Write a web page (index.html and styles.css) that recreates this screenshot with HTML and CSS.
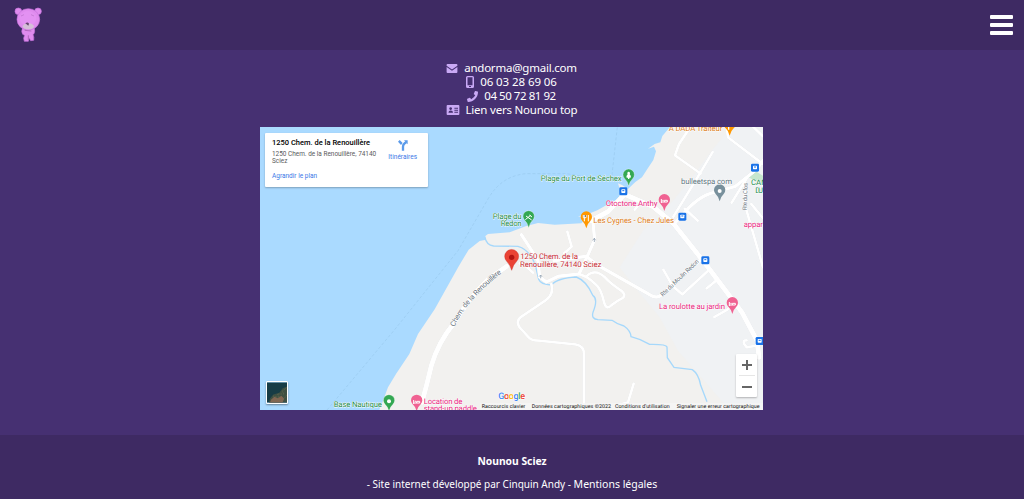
FILE: index.html
```html
<!DOCTYPE html>
<html lang="fr">
<head>
<meta charset="utf-8">
<title>Nounou Sciez</title>
<link rel="stylesheet" href="styles.css">
</head>
<body>
<header class="header">
  <svg class="logo" viewBox="0 0 90 108" aria-label="Nounou Sciez">
    <g fill="#df8bee" stroke="#c571dc" stroke-width="2">
      <circle cx="13" cy="13" r="10"/><circle cx="72" cy="13" r="10"/>
      <path d="M27 60Q20 74 26 82L32 85Q26 94 31 103L43 103L46 93L50 101L59 100Q61 90 57 83Q65 76 60 62Z"/>
      <ellipse cx="43" cy="37" rx="34" ry="32"/>
    </g>
    <ellipse cx="42" cy="34" rx="25" ry="22" fill="#e391f2"/>
    <path d="M21 27L30 23M51 23L60 27" stroke="#b971c9" stroke-width="2"/>
    <ellipse cx="43" cy="58" rx="17" ry="9" fill="#d5bed8"/>
    <path d="M34 49Q41 43 45 50L43 56Z" fill="#66446e"/>
    <path d="M32 70L52 72M43 85V99" stroke="#b167be" stroke-width="3"/>
  </svg>
  <button class="burger" aria-label="Menu"><i></i><i></i><i></i></button>
</header>
<main class="main">
  <ul class="contacts">
    <li><svg class="mail" viewBox="0 0 12 10"><path d="M1 0H11Q12 0 12 1V2L6 6L0 2V1Q0 0 1 0ZM0 3.3L6 7.4L12 3.3V9Q12 10 11 10H1Q0 10 0 9Z"/></svg><a class="wide">andorma@gmail.com</a></li>
    <li><svg class="phone" viewBox="0 0 8 12"><path fill-rule="evenodd" d="M1.5 0H6.5Q8 0 8 1.5V10.5Q8 12 6.5 12H1.5Q0 12 0 10.5V1.5Q0 0 1.5 0ZM1.5 1.3V9.2H6.5V1.3ZM3 10V11H5V10Z"/></svg><a class="mobile">06 03 28 69 06</a></li>
    <li><svg class="call" viewBox="0 0 512 512"><path d="M493 25L389 1Q373-2 366 13L318 125Q312 139 323 148L384 198Q330 312 198 384L148 323Q139 312 125 318L13 366Q-2 373 1 389L25 493Q29 512 48 512C305 512 512 304 512 48Q512 29 493 25Z"/></svg><a class="fixed">04 50 72 81 92</a></li>
    <li><svg class="card" viewBox="0 0 14 11"><path fill-rule="evenodd" d="M1 0H13Q14 0 14 1V10Q14 11 13 11H1Q0 11 0 10V1Q0 0 1 0ZM4.4 2.4A1.5 1.5 0 1 0 4.41 2.4ZM2 8.5H7Q7 6 4.5 6Q2 6 2 8.5ZM8.5 3V4H12.5V3ZM8.5 5.2V6.2H12.5V5.2ZM8.5 7.4V8.4H12.5V7.4Z"/></svg><a class="wide">Lien vers Nounou top</a></li>
  </ul>
  <section class="map">
    <svg class="mapdraw" viewBox="6 9 1509 849">
      <defs>
        <path id="pin" d="M0 26Q-3 12-12 4A17 17 0 1 1 12 4Q3 12 0 26Z"/>
        <g id="bed" fill="none" stroke="#fff" stroke-width="3"><path d="M-9-15V-3M-9-6H9V-11H0V-6"/><circle cx="-4" cy="-11" r="1"/></g>
        <g id="bus"><rect x="-12" y="-12" width="24" height="24" rx="4" fill="#1a73e8"/><rect x="-6" y="-6" width="12" height="11" rx="2" fill="#fff"/><path d="M-3-2H3M-4 6V8M4 6V8" stroke="#1a73e8" stroke-width="3"/></g>
        <path id="chemin" d="M590 609Q620 535 732 446"/>
        <path id="moulin" d="M1214 518L1326 412"/>
      </defs>
      <rect x="6" y="9" width="1509" height="849" fill="#aadaff"/>
      <path class="land" d="M1236 9L1213 36L1207 55L1190 60L1170 74L1188 68L1194 82L1186 108L1166 138L1152 160L1132 174L1110 195L1092 183L1080 178L1088 205L1082 224L1050 241L1018 259L985 272L960 277L985 282L970 298L890 302L840 297L805 306L755 325L690 330L682 336L684 347L665 351L632 377L603 425L530 556L480 630L454 690L414 750L390 790L375 830L364 858H1515V9Z"/>
      <path fill="#f0f2f4" d="M1420 9L1365 75L1300 163L1245 230L1155 320L1085 430L1135 495L1205 580L1260 680L1415 858H1515V9Z"/>
      <path fill="#c7e7ce" d="M1472 160L1493 142L1515 155V180L1492 171Z"/>
      <path class="ferry" d="M207 858L410 617L600 380L690 225Q730 155 805 149L925 149L1060 170L1078 9"/>
      <path class="river" d="M681 340Q685 363 707 366L780 367Q815 377 832 423L842 466Q848 482 880 483Q898 462 955 459Q985 470 1005 515Q1021 525 1005 565Q999 585 1020 587L1062 589Q1079 602 1098 606Q1118 620 1119 638Q1148 645 1175 661Q1225 660 1227 669L1228 701L1248 730L1303 737Q1322 750 1328 784L1347 833"/>
      <g class="roadedge"><use href="#roads"/></g>
      <g id="roads" class="roads">
        <path class="big" d="M492 835Q507 780 520 725Q540 655 589 596Q635 520 690 466L746 427"/>
        <path class="big" d="M1000 290L1050 263L1100 211L1185 248L1246 298L1345 423L1452 565L1497 650L1503 700"/>
        <path class="mid" d="M1004 285L1010 347L988 397L963 450L900 457L865 474L845 459L840 410L815 370L790 332"/>
        <path class="mid" d="M888 410L985 397L1020 424L1175 512Q1196 525 1210 513L1325 410"/>
        <path d="M785 418L804 427L825 446"/>
        <path d="M928 323L941 368L918 388"/>
        <path d="M880 480Q889 512 861 530L792 577Q772 590 784 609L811 639Q820 650 842 650L952 661Q978 665 978 690V858"/>
        <path d="M966 451Q989 458 1010 478Q1029 492 1038 534Q1044 560 1061 543Q1078 530 1094 522Q1106 514 1090 500Q1056 477 1042 461Q1012 432 986 456"/>
        <path d="M1293 15L1263 60L1251 94L1328 149M1364 84L1324 151L1246 278M1280 254L1319 290M1216 437L1244 486L1273 511L1354 437M1346 493L1373 471M1369 579L1405 559L1424 544M1127 779L1110 835L1085 842"/>
        <path class="mid" d="M1250 298L1272 275Q1320 215 1370 205L1432 187L1495 137L1515 110"/>
        <path d="M1406 9L1410 40L1515 120M1466 163L1421 236M1460 165V240L1515 430M1480 240L1515 283M1486 9L1515 37M1140 245L1130 257"/>
        <path d="M1466 649Q1453 648 1459 661L1466 670L1495 665"/>
      </g>
      <path fill="none" stroke="#7f91a4" stroke-width="2" d="M1009 343V354M1004 349L1009 343L1013 349M848 454V463M843 458L848 453L852 458"/>
      <g fill="#34a853" stroke="#fff" stroke-width="1"><use href="#pin" x="1112" y="160"/><use href="#pin" x="812" y="285"/><use href="#pin" x="393" y="837"/></g>
      <path fill="#fff" d="M1112 143A5 5 0 0 1 1115 151Q1121 157 1118 161H1114V165H1110V161H1106Q1103 157 1109 151A5 5 0 0 1 1112 143Z"/>
      <path stroke="#fff" stroke-width="3" fill="none" d="M802 287L818 274M804 276L821 288M814 273L822 279"/>
      <circle cx="393" cy="832" r="6" fill="#fff"/>
      <g fill="#f06292"><use href="#pin" x="1219" y="235"/><use href="#pin" x="1423" y="544"/><use href="#pin" x="476" y="837"/></g>
      <use href="#bed" x="1219" y="240"/><use href="#bed" x="1423" y="549"/><use href="#bed" x="476" y="843"/>
      <g fill="#ff9800"><use href="#pin" x="985" y="287"/><use href="#pin" x="1415" y="9"/></g>
      <path stroke="#fff" stroke-width="3" d="M979 273V292M984 273V281H976V273M991 273V292"/>
      <path stroke="#fff" stroke-width="4" d="M1412 0V17"/>
      <use href="#pin" x="1385" y="206" fill="#78909c"/><circle cx="1385" cy="201" r="6" fill="#fff"/>
      <use href="#bus" x="1096" y="202"/><use href="#bus" x="1273" y="278"/><use href="#bus" x="1342" y="409"/><use href="#bus" x="1491" y="131"/><use href="#bus" x="1505" y="651"/>
      <path fill="#ea4335" stroke="#c5221f" stroke-width="1" d="M761 439Q757 423 746 412A21 21 0 1 1 776 412Q765 423 761 439Z"/><circle cx="761" cy="400" r="8" fill="#b31412"/>
      <g class="labels">
        <g fill="#198b4b"><text x="848" y="170" textLength="243">Plage du Port de Séchex</text><text x="704" y="285" textLength="87">Plage du</text><text x="728" y="307" textLength="63">Redon</text><text x="227" y="849" textLength="145">Base Nautique</text><text x="1479" y="184">CAM</text><text x="1492" y="207" textLength="23">DU</text></g>
        <g fill="#e91e7d"><text x="1043" y="245" textLength="155">Otoctone.Anthy</text><text x="1203" y="555" textLength="198">La roulotte au jardin</text><text x="497" y="839" textLength="116">Location de</text><text x="497" y="861" textLength="160">stand-up paddle</text><text x="1457" y="309" textLength="58">appar</text></g>
        <g fill="#dc7b16"><text x="1006" y="298" textLength="242">Les Cygnes - Chez Jules</text><text x="1232" y="20" textLength="161">A DADA Traiteur</text></g>
        <text x="1269" y="179" fill="#607580" textLength="153">bulleetspa com</text>
        <g fill="#c52932"><text x="787" y="406" textLength="173">1250 Chem. de la</text><text x="786" y="429" textLength="244">Renouillère, 74140 Sciez</text></g>
      </g>
      <g class="streets"><text font-size="22"><textPath href="#chemin" textLength="217">Chem. de la Renouillère</textPath></text><text font-size="18"><textPath href="#moulin" textLength="151">Rte du Moulin Redon</textPath></text><text font-size="18" transform="translate(1466 259) rotate(-88)" textLength="82">Rte du Clos</text></g>
      <g class="google"><text x="721" y="825" textLength="80"><tspan fill="#4285f4">G</tspan><tspan fill="#ea4335">o</tspan><tspan fill="#fbbc04">o</tspan><tspan fill="#4285f4">g</tspan><tspan fill="#34a853">l</tspan><tspan fill="#ea4335">e</tspan></text></g>
      <path fill="#f5f5f5" fill-opacity=".75" d="M666 837H1515V858H666Z"/>
      <g class="legal"><text x="671" y="852" textLength="131">Raccourcis clavier</text><text x="821" y="852" textLength="238">Données cartographiques ©2022</text><text x="1071" y="852" textLength="164">Conditions d'utilisation</text><text x="1256" y="852" textLength="249">Signaler une erreur cartographique</text></g>
    </svg>
    <aside class="place">
      <div class="details"><h2>1250 Chem. de la Renouillère</h2><p>1250 Chem. de la Renouillère, 74140 Sciez</p><a>Agrandir le plan</a></div>
      <div class="directions"><svg viewBox="0 0 30 33"><path fill="none" stroke="#5b9bea" stroke-width="7" d="M15 32V20Q15 15 19 11L25 6"/><path fill="#5b9bea" d="M18 1H29V13ZM0 5L5 0L14 9L9 15Z"/></svg><a>Itinéraires</a></div>
    </aside>
    <svg class="satellite" viewBox="0 0 60 60"><path fill="#173c45" d="M0 0H60V60H0Z"/><path fill="#3f5042" d="M60 12L47 17L37 31L19 36L9 48L6 60H60Z"/><path fill="#826652" d="M12 52L22 43L33 47L43 40L51 48L47 60H9Z"/><path stroke="#747456" stroke-width="2" stroke-dasharray="3 4" fill="none" d="M58 16L45 27L52 34L31 35L38 45L19 41M58 39L46 56L29 50L18 59"/></svg>
    <div class="zoom"><button aria-label="Zoom avant"><svg viewBox="0 0 10 10"><path d="M0 5H10M5 0V10"/></svg></button><button aria-label="Zoom arrière"><svg viewBox="0 0 10 10"><path d="M0 5H10"/></svg></button></div>
  </section>
</main>
<footer class="footer"><strong>Nounou Sciez</strong><p><span class="credit">- Site internet développé par Cinquin Andy -</span> <a class="mentions">Mentions légales</a></p></footer>
</body>
</html>
```
FILE: styles.css
```css
* { box-sizing: border-box; }
body { margin: 0; height: 499px; overflow: hidden; display: flex; flex-direction: column; background: #463072; color: #fff; font-family: "Noto Sans", sans-serif; }
.header { height: 50px; flex: none; background: #3e2a63; display: flex; justify-content: space-between; padding: 7px 11px 0 14px; }
.logo { width: 30px; height: 36px; }
.burger { width: 23px; height: 20px; margin-top: 8px; padding: 0; border: 0; background: none; display: flex; flex-direction: column; justify-content: space-between; }
.burger i { display: block; width: 23px; height: 4px; border-radius: 1px; background: #fff; }
.main { height: 385px; flex: none; display: flex; flex-direction: column; align-items: center; padding: 11px 1px 0 0; }
.contacts { list-style: none; margin: 0; padding: 0; font-size: 11.5px; line-height: 14px; }
.contacts li { height: 14px; display: flex; justify-content: center; align-items: center; gap: 6px; white-space: nowrap; }
.contacts svg { fill: #c9a9f5; flex: none; }
.wide { letter-spacing: -.22px; }
.mobile { letter-spacing: -.08px; }
.fixed { letter-spacing: -.45px; }
.mail { width: 12px; height: 9px; }
.phone { width: 8px; height: 12px; }
.call { width: 11px; height: 11px; }
.card { width: 14px; height: 10px; }
.map { position: relative; width: 503px; height: 283px; margin-top: 10px; overflow: hidden; font-family: Roboto, sans-serif; }
.mapdraw { display: block; width: 503px; height: 283px; }
.mapdraw text { text-rendering: geometricPrecision; }
.land { fill: #f2f1ef; }
.ferry { fill: none; stroke: #98c8ed; stroke-width: 2; stroke-dasharray: 9 6; }
.river { fill: none; stroke: #a6d8fb; stroke-width: 4; }
.roads path { fill: none; stroke: #fff; stroke-width: 7; stroke-linejoin: round; stroke-linecap: round; }
.roads .mid { stroke-width: 9; }
.roads .big { stroke-width: 14; }
.roadedge { filter: drop-shadow(0 0 2px #c5c9ce); }
.labels text { font-size: 23.5px; paint-order: stroke; stroke: #fff; stroke-width: 2.5px; stroke-linejoin: round; }
.streets { fill: #69737d; paint-order: stroke; stroke: #fff; stroke-width: 2px; }
.google { font-size: 27px; font-weight: 500; paint-order: stroke; stroke: #fff; stroke-width: 3px; }
.legal { font-size: 16px; fill: #111; }
.place { position: absolute; left: 5px; top: 6px; width: 163px; height: 54px; display: flex; justify-content: space-between; padding: 5px 11px 0 7px; background: #fff; border-radius: 1px; box-shadow: 0 1px 2px #0004; }
.details { width: 112px; }
.details h2 { margin: 0; font-size: 7.5px; line-height: 9px; font-weight: 500; color: #000; white-space: nowrap; }
.details p { margin: 4px 0 7px; font-size: 6.45px; line-height: 7px; color: #5b5b5b; }
.place a { display: block; color: #3a78e7; font-size: 6.5px; line-height: 8px; }
.directions { display: flex; flex-direction: column; align-items: center; padding-top: 2px; }
.directions svg { width: 10px; height: 11px; margin-bottom: 2px; }
.satellite { position: absolute; left: 6px; top: 254px; width: 22px; height: 23px; border: 1px solid #fff; border-radius: 1px; box-shadow: 0 1px 2px #0006; }
.zoom { position: absolute; left: 476px; top: 227px; width: 21px; height: 43px; background: #fff; border-radius: 1px; box-shadow: 0 1px 2px #0004; display: flex; flex-direction: column; align-items: center; }
.zoom button { width: 16px; flex: 1; display: grid; place-items: center; padding: 0; border: 0; background: none; }
.zoom button + button { border-top: 1px solid #e6e6e6; }
.zoom svg { width: 10px; height: 10px; stroke: #666; stroke-width: 2; }
.footer { height: 64px; flex: none; background: #3e2a63; text-align: center; padding-top: 19px; font-size: 10px; line-height: 14px; }
.footer strong { display: block; font-size: 10.3px; }
.footer p { margin: 9px 0 0; }
.mentions { font-size: 10.5px; }
```
